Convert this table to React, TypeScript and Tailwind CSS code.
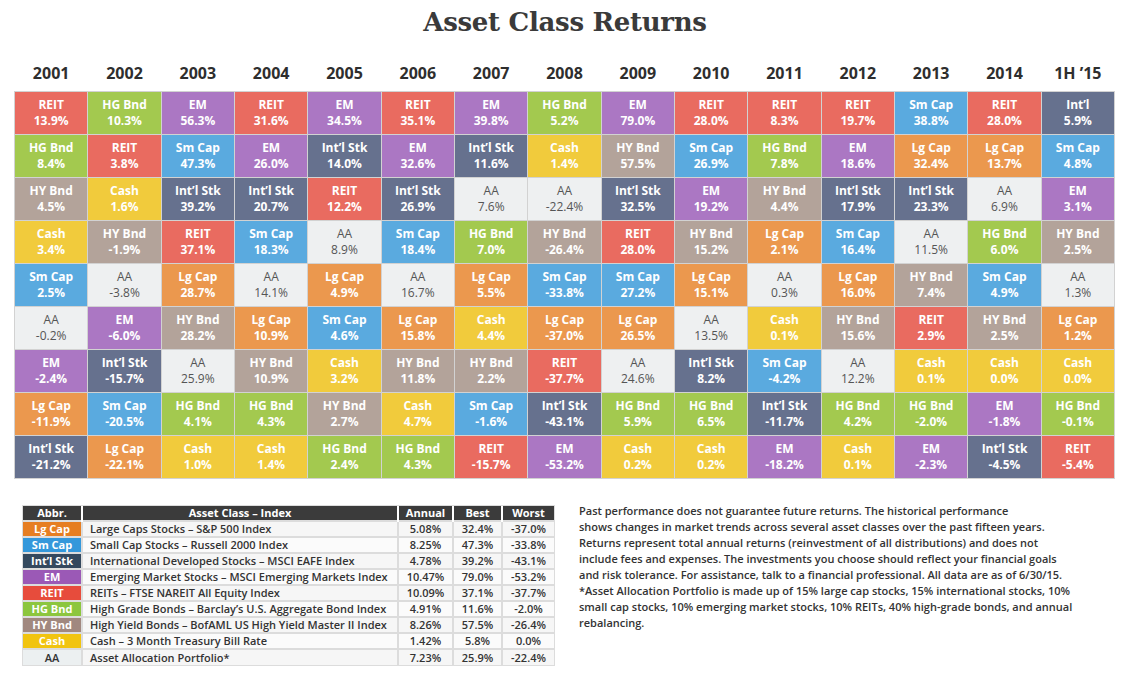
import React from "react";

type K = "REIT" | "HG" | "EM" | "SC" | "IS" | "HY" | "CA" | "LC" | "AA" | "INT";

const cellCls: Record<K, string> = {
  REIT: "bg-[#e96b60] text-white font-bold",
  HG: "bg-[#a3c94f] text-white font-bold",
  EM: "bg-[#ab77c3] text-white font-bold",
  SC: "bg-[#5aaadf] text-white font-bold",
  IS: "bg-[#66718e] text-white font-bold",
  INT: "bg-[#66718e] text-white font-bold",
  HY: "bg-[#b3a39a] text-white font-bold",
  CA: "bg-[#f1cb3c] text-white font-bold",
  LC: "bg-[#eb984e] text-white font-bold",
  AA: "bg-[#eef0f1] text-[#555] font-medium",
};

const label: Record<K, string> = {
  REIT: "REIT",
  HG: "HG Bnd",
  EM: "EM",
  SC: "Sm Cap",
  IS: "Int’l Stk",
  INT: "Int’l",
  HY: "HY Bnd",
  CA: "Cash",
  LC: "Lg Cap",
  AA: "AA",
};

const years = ["2001", "2002", "2003", "2004", "2005", "2006", "2007", "2008", "2009", "2010", "2011", "2012", "2013", "2014", "1H ’15"];

const cols: [K, string][][] = [
  [["REIT", "13.9"], ["HG", "8.4"], ["HY", "4.5"], ["CA", "3.4"], ["SC", "2.5"], ["AA", "-0.2"], ["EM", "-2.4"], ["LC", "-11.9"], ["IS", "-21.2"]],
  [["HG", "10.3"], ["REIT", "3.8"], ["CA", "1.6"], ["HY", "-1.9"], ["AA", "-3.8"], ["EM", "-6.0"], ["IS", "-15.7"], ["SC", "-20.5"], ["LC", "-22.1"]],
  [["EM", "56.3"], ["SC", "47.3"], ["IS", "39.2"], ["REIT", "37.1"], ["LC", "28.7"], ["HY", "28.2"], ["AA", "25.9"], ["HG", "4.1"], ["CA", "1.0"]],
  [["REIT", "31.6"], ["EM", "26.0"], ["IS", "20.7"], ["SC", "18.3"], ["AA", "14.1"], ["LC", "10.9"], ["HY", "10.9"], ["HG", "4.3"], ["CA", "1.4"]],
  [["EM", "34.5"], ["IS", "14.0"], ["REIT", "12.2"], ["AA", "8.9"], ["LC", "4.9"], ["SC", "4.6"], ["CA", "3.2"], ["HY", "2.7"], ["HG", "2.4"]],
  [["REIT", "35.1"], ["EM", "32.6"], ["IS", "26.9"], ["SC", "18.4"], ["AA", "16.7"], ["LC", "15.8"], ["HY", "11.8"], ["CA", "4.7"], ["HG", "4.3"]],
  [["EM", "39.8"], ["IS", "11.6"], ["AA", "7.6"], ["HG", "7.0"], ["LC", "5.5"], ["CA", "4.4"], ["HY", "2.2"], ["SC", "-1.6"], ["REIT", "-15.7"]],
  [["HG", "5.2"], ["CA", "1.4"], ["AA", "-22.4"], ["HY", "-26.4"], ["SC", "-33.8"], ["LC", "-37.0"], ["REIT", "-37.7"], ["IS", "-43.1"], ["EM", "-53.2"]],
  [["EM", "79.0"], ["HY", "57.5"], ["IS", "32.5"], ["REIT", "28.0"], ["SC", "27.2"], ["LC", "26.5"], ["AA", "24.6"], ["HG", "5.9"], ["CA", "0.2"]],
  [["REIT", "28.0"], ["SC", "26.9"], ["EM", "19.2"], ["HY", "15.2"], ["LC", "15.1"], ["AA", "13.5"], ["IS", "8.2"], ["HG", "6.5"], ["CA", "0.2"]],
  [["REIT", "8.3"], ["HG", "7.8"], ["HY", "4.4"], ["LC", "2.1"], ["AA", "0.3"], ["CA", "0.1"], ["SC", "-4.2"], ["IS", "-11.7"], ["EM", "-18.2"]],
  [["REIT", "19.7"], ["EM", "18.6"], ["IS", "17.9"], ["SC", "16.4"], ["LC", "16.0"], ["HY", "15.6"], ["AA", "12.2"], ["HG", "4.2"], ["CA", "0.1"]],
  [["SC", "38.8"], ["LC", "32.4"], ["IS", "23.3"], ["AA", "11.5"], ["HY", "7.4"], ["REIT", "2.9"], ["CA", "0.1"], ["HG", "-2.0"], ["EM", "-2.3"]],
  [["REIT", "28.0"], ["LC", "13.7"], ["AA", "6.9"], ["HG", "6.0"], ["SC", "4.9"], ["HY", "2.5"], ["CA", "0.0"], ["EM", "-1.8"], ["IS", "-4.5"]],
  [["INT", "5.9"], ["SC", "4.8"], ["EM", "3.1"], ["HY", "2.5"], ["AA", "1.3"], ["LC", "1.2"], ["CA", "0.0"], ["HG", "-0.1"], ["REIT", "-5.4"]],
];

const legend: { abbr: string; cls: string; name: string; a: string; b: string; w: string }[] = [
  { abbr: "Lg Cap", cls: "bg-[#e67e22] text-white", name: "Large Caps Stocks – S&P 500 Index", a: "5.08%", b: "32.4%", w: "-37.0%" },
  { abbr: "Sm Cap", cls: "bg-[#3498db] text-white", name: "Small Cap Stocks – Russell 2000 Index", a: "8.25%", b: "47.3%", w: "-33.8%" },
  { abbr: "Int’l Stk", cls: "bg-[#34495e] text-white", name: "International Developed Stocks – MSCI EAFE Index", a: "4.78%", b: "39.2%", w: "-43.1%" },
  { abbr: "EM", cls: "bg-[#9b59b6] text-white", name: "Emerging Market Stocks – MSCI Emerging Markets Index", a: "10.47%", b: "79.0%", w: "-53.2%" },
  { abbr: "REIT", cls: "bg-[#e74c3c] text-white", name: "REITs – FTSE NAREIT All Equity Index", a: "10.09%", b: "37.1%", w: "-37.7%" },
  { abbr: "HG Bnd", cls: "bg-[#8cc63e] text-white", name: "High Grade Bonds – Barclay’s U.S. Aggregate Bond Index", a: "4.91%", b: "11.6%", w: "-2.0%" },
  { abbr: "HY Bnd", cls: "bg-[#a1887f] text-white", name: "High Yield Bonds – BofAML US High Yield Master II Index", a: "8.26%", b: "57.5%", w: "-26.4%" },
  { abbr: "Cash", cls: "bg-[#f1c40f] text-white", name: "Cash – 3 Month Treasury Bill Rate", a: "1.42%", b: "5.8%", w: "0.0%" },
  { abbr: "AA", cls: "bg-[#ecf0f1] text-[#333] !font-semibold", name: "Asset Allocation Portfolio*", a: "7.23%", b: "25.9%", w: "-22.4%" },
];

const para = [
  "Past performance does not guarantee future returns. The historical performance",
  "shows changes in market trends across several asset classes over the past fifteen years.",
  "Returns represent total annual returns (reinvestment of all distributions) and does not",
  "include fees and expenses. The investments you choose should reflect your financial goals",
  "and risk tolerance. For assistance, talk to a financial professional. All data are as of 6/30/15.",
  "*Asset Allocation Portfolio is made up of 15% large cap stocks, 15% international stocks, 10%",
  "small cap stocks, 10% emerging market stocks, 10% REITs, 40% high-grade bonds, and annual",
  "rebalancing.",
];

export default function App() {
  const rows = Array.from({ length: 9 }, (_, r) => r);
  return (
    <div className="w-[1130px] h-[680px] bg-white overflow-hidden font-['Open_Sans',sans-serif] text-[#333]">
      <h1 className="pt-[6px] h-[40px] text-center text-[#3a3a3a] font-['DejaVu_Serif',serif] font-bold text-[26px] leading-[32px] tracking-[-0.3px]">
        Asset Class Returns
      </h1>
      <div className="ml-[14px] w-[1101px]">
        <div className="mt-[22px] grid grid-cols-[repeat(15,minmax(0,1fr))] gap-px px-px h-[29px]">
          {years.map((y) => (
            <div key={y} className="text-center text-[16px] font-bold leading-[22px] text-[#2e2e2e]">
              {y}
            </div>
          ))}
        </div>
        <div className="grid grid-cols-[repeat(15,minmax(0,1fr))] grid-rows-[repeat(9,42px)] gap-px p-px bg-[#d2d2d2]">
          {rows.map((r) =>
            cols.map((c, ci) => {
              const [k, v] = c[r];
              return (
                <div
                  key={`${r}-${ci}`}
                  className={`flex flex-col items-center justify-center text-[12px] leading-[16px] ${cellCls[k]}`}
                >
                  <span>{label[k]}</span>
                  <span>{v}%</span>
                </div>
              );
            })
          )}
        </div>
      </div>
      <div className="flex mt-[26px]">
        <div className="ml-[22px] w-[533px] border border-[#dcdcdc]">
          <table className="w-full border-collapse text-[11px] leading-[14px] font-semibold">
            <thead>
              <tr className="bg-[#3b3b3b] text-white font-bold h-[15px]">
                <th className="w-[59px] font-bold border-r-2 border-[#fff]">Abbr.</th>
                <th className="w-[316px] font-bold border-r-2 border-[#fff]">Asset Class – Index</th>
                <th className="w-[55px] font-bold border-r-2 border-[#fff]">Annual</th>
                <th className="w-[49px] font-bold border-r-2 border-[#fff]">Best</th>
                <th className="font-bold">Worst</th>
              </tr>
            </thead>
            <tbody>
              {legend.map((l, i) => (
                <tr key={l.abbr} className={`h-[16px] ${i % 2 === 0 ? "bg-[#f6f6f6]" : "bg-[#fbfbfb]"}`}>
                  <td className={`text-center font-bold border-t-2 border-[#dcdcdc] ${l.cls}`}>{l.abbr}</td>
                  <td className="pl-[7px] border-t-2 border-l-2 border-[#dcdcdc] whitespace-nowrap">{l.name}</td>
                  <td className="text-center border-t-2 border-l-2 border-[#dcdcdc]">{l.a}</td>
                  <td className="text-center border-t-2 border-l-2 border-[#dcdcdc]">{l.b}</td>
                  <td className="text-center border-t-2 border-l-2 border-[#dcdcdc]">{l.w}</td>
                </tr>
              ))}
            </tbody>
          </table>
        </div>
        <div className="ml-[24px] -mt-[2px] text-[11px] leading-[16px] font-semibold text-[#333]">
          {para.map((p) => (
            <div key={p} className="whitespace-nowrap">
              {p}
            </div>
          ))}
        </div>
      </div>
    </div>
  );
}
